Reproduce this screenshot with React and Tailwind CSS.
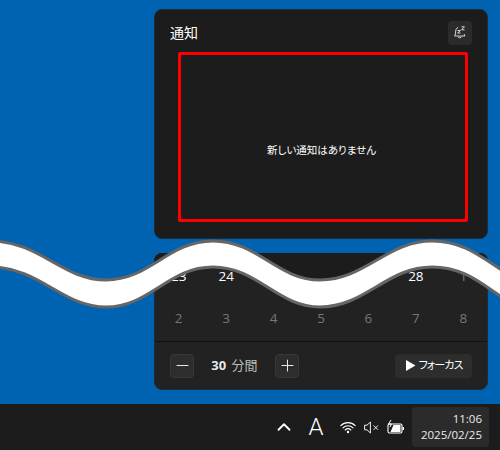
import { ChevronUp, Minus, Plus } from 'lucide-react'

const jp = 'font-["Open_Sans","Noto_Sans_CJK_JP",sans-serif] [font-feature-settings:"palt"]'

const week1 = ['23', '24', '25', '26', '27', '28', '1']
const week2 = ['2', '3', '4', '5', '6', '7', '8']

const topEdge = 'M-10 241C40 241 62 280 106 280C150 280 168 241 213 241C258 241 277 280 320 280C365 280 387 241 432 241C472 241 490 267 520 280'

function SnoozeBell() {
  return (
    <svg width="12" height="13" viewBox="0 0 12 13" fill="none" stroke="#d4d4d4" strokeWidth="1">
      <path d="M4 1.5C2.5 2 1.8 3.5 1.7 5L1.5 8 0.5 10H11L10 8" />
      <path d="M4 11Q5.5 12.8 7.5 11" />
      <path d="M3.5 4.5H6.5L3.5 7H6.5" />
      <path d="M7.5 0.8H10.5L7.5 3.8H10.5" />
    </svg>
  )
}

function Wifi() {
  return (
    <svg width="16" height="13" viewBox="0 0 16 13" fill="none" stroke="#ffffff" strokeWidth="1.1" strokeLinecap="round">
      <path d="M0.8 4.6C4.8 0.6 11.2 0.6 15.2 4.6" />
      <path d="M3 6.8C5.8 4.1 10.2 4.1 13 6.8" />
      <path d="M5.2 9C6.8 7.5 9.2 7.5 10.8 9" />
      <circle cx="8" cy="11" r="1.2" fill="#ffffff" stroke="none" />
    </svg>
  )
}

function Muted() {
  return (
    <svg width="15" height="13" viewBox="0 0 15 13" fill="none" stroke="#f0f0f0" strokeWidth="1">
      <path d="M0.6 4.2H3L6.4 1V12L3 8.8H0.6Z" strokeLinejoin="round" />
      <path d="M9.6 4.4L14 8.8M14 4.4L9.6 8.8" />
    </svg>
  )
}

function Battery() {
  return (
    <svg width="17" height="14" viewBox="0 0 17 14" fill="none">
      <path d="M1 5.5Q1 4 2.5 4H13.5Q15 4 15 5.5V11.5Q15 13 13.5 13H2.5Q1 13 1 11.5Z" stroke="#ffffff" strokeWidth="1.1" />
      <path d="M3.5 12L6.5 5H13.5V12Z" fill="#ffffff" />
      <rect x="15.5" y="7" width="1.5" height="3" fill="#ffffff" />
      <path d="M4 0L1.5 4H4.5L3 7" stroke="#ffffff" strokeWidth="1" />
    </svg>
  )
}

// the torn edge: everything of the calendar above it is the darker header part
function Wave() {
  return (
    <svg className="absolute left-0 top-0 pointer-events-none" width="500" height="450" viewBox="0 0 500 450">
      <defs>
        <clipPath id="calTop">
          <rect x="154" y="253" width="334" height="60" rx="8" />
        </clipPath>
      </defs>
      <path d={`${topEdge}V200H-10Z`} fill="#1c1c1c" clipPath="url(#calTop)" />
      <path
        d={`${topEdge}V307C490 294 472 267 432 267C387 267 365 307 320 307C277 307 258 267 213 267C168 267 150 307 106 307C62 307 40 267 -10 267Z`}
        fill="#ffffff"
        stroke="#666666"
        strokeWidth="3"
      />
    </svg>
  )
}

export default function App() {
  return (
    <div className={`relative w-[500px] h-[450px] overflow-hidden flex flex-col bg-[#0063b1] ${jp}`}>
      <div className="flex-1 flex flex-col items-end pt-[9px] pr-3 gap-[14px]">
        {/* notifications */}
        <section className="w-[334px] h-[230px] flex flex-col rounded-lg bg-[#1c1c1c] border border-[#1e2b38]">
          <div className="h-[42px] flex items-center justify-between px-[15px] pt-[3px] shrink-0">
            <h2 className="text-[14px] text-white">通知</h2>
            <button className="w-6 h-6 flex items-center justify-center rounded bg-[#2b2b2b]">
              <SnoozeBell />
            </button>
          </div>
          <div className="ml-[23px] w-[290px] h-[170px] pt-[27px] pr-[3px] border-[3px] border-[#ff0000] rounded-[2px] flex items-center justify-center text-[10.5px] text-white">
            新しい通知はありません
          </div>
        </section>

        {/* calendar + focus */}
        <section className="w-[334px] h-[137px] flex flex-col rounded-lg bg-[#222222] border border-[#1e2b38] text-[13.5px]">
          <div className="h-[88px] shrink-0 flex flex-col justify-end pb-[2px] border-b border-[#111111]">
            <div className="grid grid-cols-7 h-[42px] items-center text-center text-white">
              {week1.map((d, i) => (
                <span key={d} className={i === 6 ? 'text-[#777777]' : ''}>{d}</span>
              ))}
            </div>
            <div className="grid grid-cols-7 h-[42px] items-center text-center text-[#777777]">
              {week2.map((d) => (
                <span key={d}>{d}</span>
              ))}
            </div>
          </div>
          <div className="flex-1 flex items-center justify-between px-[15px]">
            <div className="flex items-center">
              <button className="w-6 h-6 flex items-center justify-center rounded bg-[#2d2d2d] border border-[#383838]">
                <Minus size={19} strokeWidth={1.3} color="#e8e8e8" />
              </button>
              <span className="w-[81px] text-center text-[13px] text-[#bdbdbd]">
                <b className="font-bold text-[#e8e8e8] mr-[2px]">30</b> 分間
              </span>
              <button className="w-6 h-6 flex items-center justify-center rounded bg-[#2d2d2d] border border-[#383838]">
                <Plus size={19} strokeWidth={1.3} color="#e8e8e8" />
              </button>
            </div>
            <button className="w-[77px] h-6 flex items-center justify-center gap-[3px] rounded bg-[#2d2d2d] text-[11px] tracking-[-1px] text-white">
              <svg width="11" height="13" viewBox="0 0 11 13">
                <path d="M1 1V12L10.5 6.5Z" fill="#ffffff" />
              </svg>
              フォーカス
            </button>
          </div>
        </section>
      </div>

      {/* taskbar */}
      <footer className="mt-[14px] h-[46px] shrink-0 flex items-center justify-end bg-[#1c1c1c] pr-[11px]">
        <ChevronUp size={22} strokeWidth={2} color="#ffffff" />
        <span className='ml-[13px] w-[16px] text-center text-[24px] font-["Roboto"] font-light leading-none text-white'>A</span>
        <span className="ml-[16px] flex items-center gap-[8px]">
          <Wifi />
          <Muted />
          <Battery />
        </span>
        <div className="ml-[8px] w-[77px] h-[40px] flex flex-col items-end justify-center pr-[7px] rounded bg-[#2b2b2b] text-[11.5px] leading-[16px] text-[#ececec]">
          <span>11:06</span>
          <span>2025/02/25</span>
        </div>
      </footer>

      <Wave />
    </div>
  )
}
